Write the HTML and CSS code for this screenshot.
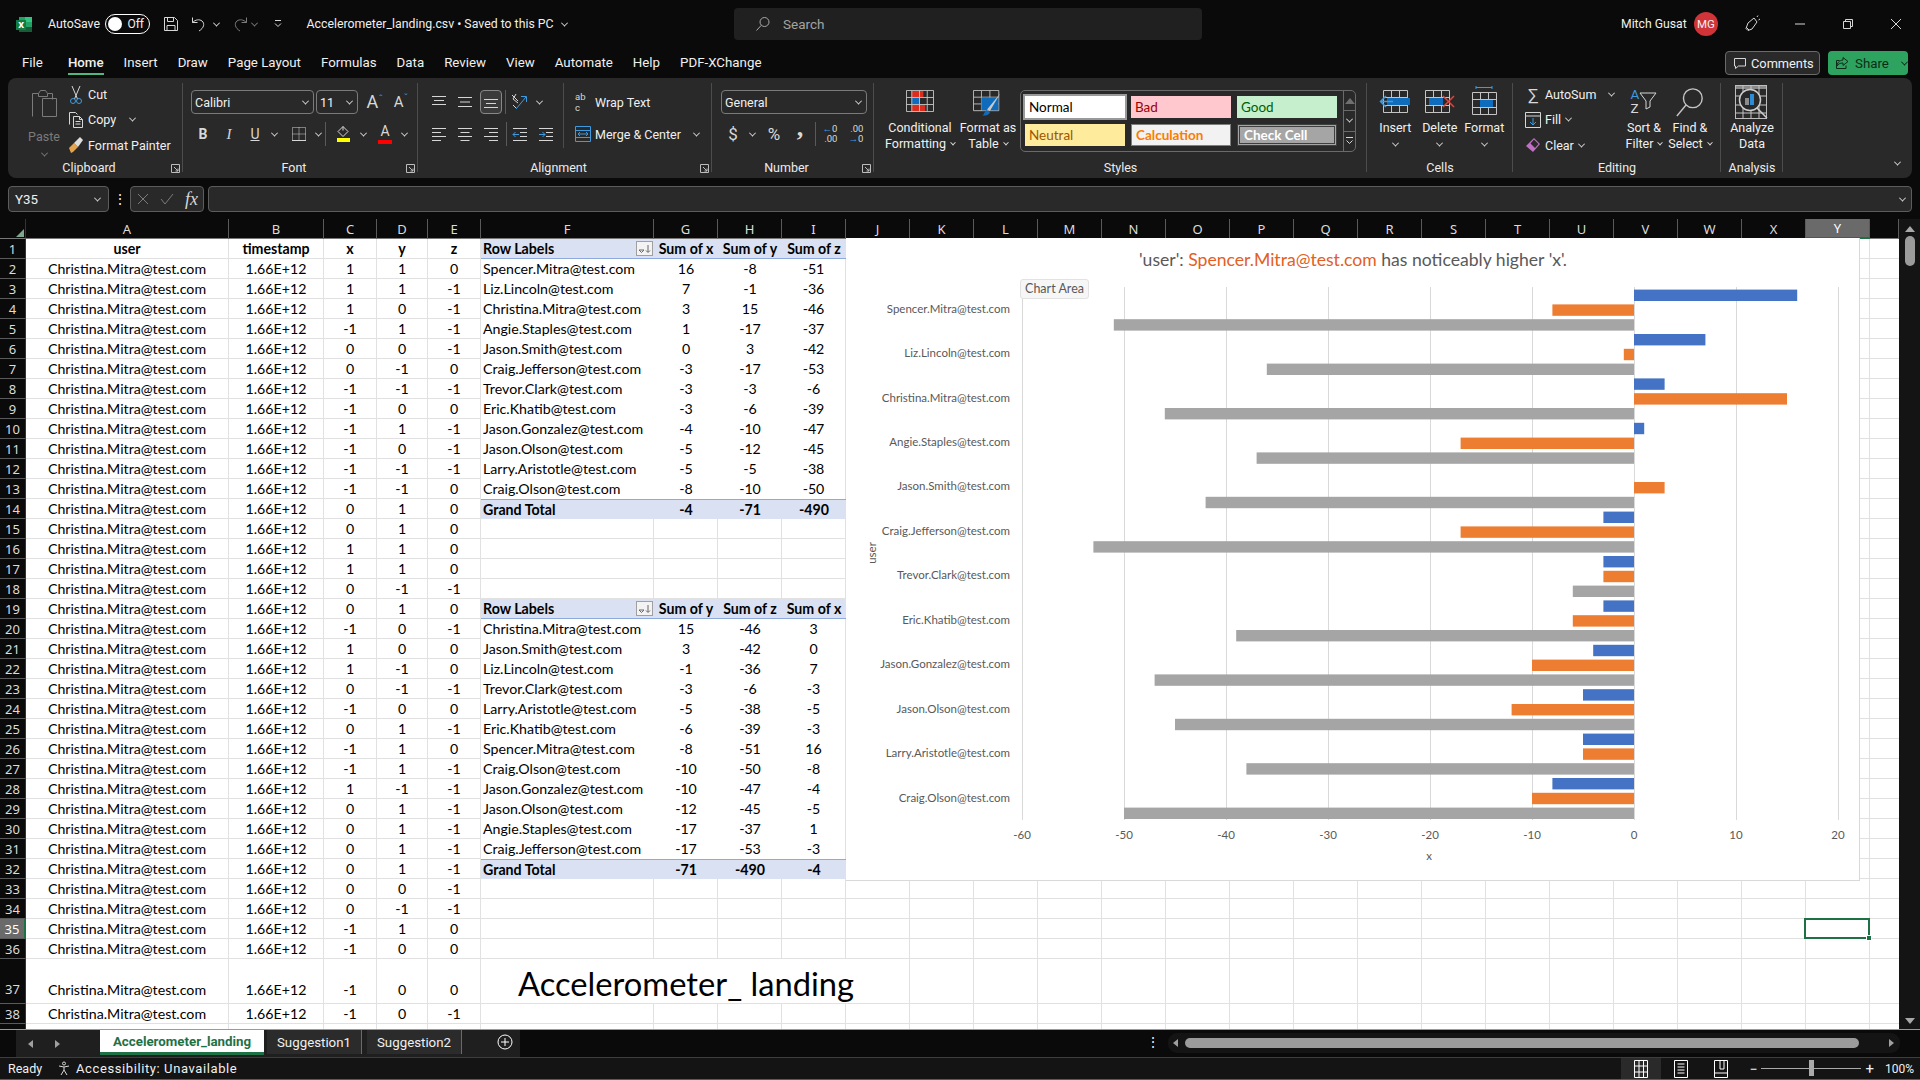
FILE: index.html
```html
<!DOCTYPE html>
<html lang="en">
<head>
    <meta charset="utf-8">
    <title>Accelerometer_landing.csv - Excel</title>
    <link rel="stylesheet" href="styles.css">
</head>
<body>

<!-- title bar -->
<header class="titlebar">
    <div class="tb-left">
        <svg class="xl-logo" width="17" height="17" viewBox="0 0 17 17"><rect x="4" y="1" width="13" height="15" fill="#21a366"/><rect x="10" y="1" width="7" height="5" fill="#33c481"/><rect x="4" y="11" width="13" height="5" fill="#185c37"/><rect x="1" y="4" width="10" height="10" fill="#107c41"/><text x="3.2" y="12" class="xl-x">x</text></svg>
        <span class="autosave">AutoSave</span>
        <span class="toggle"><i></i>Off</span>
        <svg class="ic qat-save" width="16" height="16" viewBox="0 0 16 16"><path d="M1.5 1.5h10l3 3v10h-13zM4.5 1.5v4h6v-4M4 14.5v-5h8v5"/></svg>
        <svg class="ic qat-undo" width="16" height="16" viewBox="0 0 16 16"><path d="M1.5 1.5v5h5M1.5 6.5c3-3 7-3.500 9.500-1.500 3 2.500 2 7-3 10"/></svg>
        <span class="chev qat-c1"></span>
        <svg class="ic dim qat-redo" width="16" height="16" viewBox="0 0 16 16"><path d="M14.500 1.500v5h-5M14.500 6.500c-3-3-7-3.500-9.500-1.500-3 2.500-2 7 3 10"/></svg>
        <span class="chev dimc qat-c2"></span>
        <svg class="ic qat-more" width="10" height="10" viewBox="0 0 10 10"><path d="M2 1.500h6M2 4.500l3 3 3-3"/></svg>
        <span class="doc-title">Accelerometer_landing.csv &bull; Saved to this PC</span>
        <span class="chev doc-c"></span>
    </div>
    <div class="search">
        <svg class="ic dim2" width="16" height="16" viewBox="0 0 16 16"><circle cx="9.500" cy="6" r="4.500"/><path d="M6.300 9.300L1.500 14.500"/></svg>
        <span>Search</span>
    </div>
    <div class="tb-right">
        <span class="user-name">Mitch Gusat</span>
        <span class="avatar">MG</span>
        <svg class="ic pen" width="18" height="18" viewBox="0 0 18 18"><path d="M5 8l6-5 3 4-5 7-4 1.500-2-2zM14 2l1-1.500M15.500 5L17 4M3 12l3 3"/></svg>
        <svg class="ic win-btn" width="12" height="12" viewBox="0 0 12 12"><path d="M1 6h10"/></svg>
        <svg class="ic win-btn" width="12" height="12" viewBox="0 0 12 12"><path d="M1.500 3.500h7v7h-7zM3.500 3.500v-2h7v7h-2"/></svg>
        <svg class="ic win-btn" width="12" height="12" viewBox="0 0 12 12"><path d="M1 1l10 10M11 1L1 11"/></svg>
    </div>
</header>

<!-- menu tabs -->
<nav class="menubar">
    <a class="m-item m-file">File</a>
    <a class="m-item on">Home</a>
    <a class="m-item">Insert</a>
    <a class="m-item">Draw</a>
    <a class="m-item">Page Layout</a>
    <a class="m-item">Formulas</a>
    <a class="m-item">Data</a>
    <a class="m-item">Review</a>
    <a class="m-item">View</a>
    <a class="m-item">Automate</a>
    <a class="m-item">Help</a>
    <a class="m-item">PDF-XChange</a>
    <div class="m-right">
        <button class="btn-comments"><svg class="ic" width="14" height="14" viewBox="0 0 14 14"><path d="M1.500 2.500h11v7.500h-7l-3 2.500v-2.500h-1z"/></svg>Comments</button>
        <button class="btn-share"><svg class="ic darkic" width="14" height="14" viewBox="0 0 14 14"><path d="M8 1.500l5 4-5 4v-2.500c-3 0-5 1-6 3 0-3 2-5.500 6-6zM11 9.500v3h-9.500v-8h3"/></svg>Share<span class="chev darkc"></span></button>
    </div>
</nav>

<!-- ribbon -->
<section class="ribbon">

    <div class="group g-clip">
        <div class="g-body">
            <div class="paste">
                <svg class="ic dim" width="30" height="32" viewBox="0 0 30 32"><path d="M3.500 28.500V5.500h6l2-3h5l2 3h5v6M9.500 5.500v3h9v-3"/><path d="M13.500 13.500h14v18h-14z" transform="translate(0 -3)"/></svg>
                <span class="paste-txt">Paste</span>
                <span class="chev dimc"></span>
            </div>
            <div class="stack">
                <div class="s-row"><svg class="ic ic-s" width="16" height="20" viewBox="0 0 16 20"><path d="M4 1l5.500 13M12 1L6.500 14"/><circle class="blue" cx="5" cy="16" r="2.500"/><circle class="blue" cx="11" cy="16" r="2.500"/></svg>Cut</div>
                <div class="s-row"><svg class="ic ic-s" width="16" height="18" viewBox="0 0 16 18"><path d="M1.500 13.500v-12h6l2 2M5.500 16.500v-11h6l3 3v8zM11.500 5.500v3h3M7.500 10.500h5M7.500 13h5"/></svg>Copy<span class="chev copy-c"></span></div>
                <div class="s-row"><svg class="ic-s" width="16" height="18" viewBox="0 0 16 18"><path d="M1 12l5-5 4 4-5 5-2 1z" fill="#e3a44d"/><path d="M6 7l6-6 3 3-5 7z" fill="#ddd"/></svg>Format Painter</div>
            </div>
        </div>
        <div class="g-label">Clipboard<svg class="launch" width="9" height="9" viewBox="0 0 9 9"><path d="M.5 8.500v-8h8v8zM3 3l4 4M7 4.500V7H4.500"/></svg></div>
    </div>

    <div class="group g-font">
        <div class="g-body col">
            <div class="r-row">
                <div class="combo c-font">Calibri<span class="chev"></span></div>
                <div class="combo c-size">11<span class="chev"></span></div>
                <span class="glyph-a">A<sup>&#710;</sup></span>
                <span class="glyph-a small">A<sup>&#711;</sup></span>
            </div>
            <div class="r-row">
                <span class="ib"><b>B</b></span>
                <span class="ib"><i class="it">I</i></span>
                <span class="ib"><u>U</u></span>
                <span class="chev cw"></span>
                <span class="ib bd"><svg class="ic" width="16" height="16" viewBox="0 0 16 16"><path stroke-dasharray="1 1" d="M1.500 1.500h13v13h-13zM8 1.500v13M1.500 8h13"/><path d="M1 14.500h14"/></svg></span>
                <span class="chev cw"></span>
                <span class="sep s1"></span>
                <span class="ib"><svg class="ic" width="16" height="18" viewBox="0 0 16 18"><path d="M7 1.500l5 5-5 5-5-5zM7 1.500v4"/><rect x="1" y="13" width="13" height="4" fill="#ffff00" stroke="none"/></svg></span>
                <span class="chev cw"></span>
                <span class="ib fc"><span class="fc-a">A</span></span>
                <span class="chev cw"></span>
            </div>
        </div>
        <div class="g-label">Font<svg class="launch" width="9" height="9" viewBox="0 0 9 9"><path d="M.5 8.500v-8h8v8zM3 3l4 4M7 4.500V7H4.500"/></svg></div>
    </div>

    <div class="group g-align">
        <div class="g-body">
            <div class="al-left col">
                <div class="r-row">
                    <span class="ia"><svg class="ic" width="16" height="14" viewBox="0 0 16 14"><path d="M1 1.500h14M3 5.500h10M1 9.500h14"/></svg></span>
                    <span class="ia"><svg class="ic" width="16" height="14" viewBox="0 0 16 14"><path d="M1 2.500h14M3 7h10M1 11.500h14"/></svg></span>
                    <span class="ia sel"><svg class="ic" width="16" height="14" viewBox="0 0 16 14"><path d="M1 4.500h14M3 8.500h10M1 12.500h14"/></svg></span>
                    <span class="sep s2"></span>
                    <span class="ia orient"><svg class="ic" width="18" height="18" viewBox="0 0 18 18"><path d="M2 2l6 6M6 1l-3 5 5 4M3 12l3 3"/><path class="blue" d="M6 16L16 4M11 3.500h5.500V9"/></svg></span>
                    <span class="chev cw"></span>
                </div>
                <div class="r-row">
                    <span class="ia"><svg class="ic" width="16" height="14" viewBox="0 0 16 14"><path d="M1 1.500h14M1 5.500h9M1 9.500h14M1 13.500h9"/></svg></span>
                    <span class="ia"><svg class="ic" width="16" height="14" viewBox="0 0 16 14"><path d="M1 1.500h14M3.500 5.500h9M1 9.500h14M3.500 13.500h9"/></svg></span>
                    <span class="ia"><svg class="ic" width="16" height="14" viewBox="0 0 16 14"><path d="M1 1.500h14M6 5.500h9M1 9.500h14M6 13.500h9"/></svg></span>
                    <span class="sep s2"></span>
                    <span class="ia ind1"><svg class="ic" width="16" height="14" viewBox="0 0 16 14"><path d="M1 1.500h14M8 5.500h7M8 9.500h7M1 13.500h14"/><path class="blue" d="M7 7.500H1M3.500 5L1 7.500 3.500 10"/></svg></span>
                    <span class="ia ind2"><svg class="ic" width="16" height="14" viewBox="0 0 16 14"><path d="M1 1.500h14M8 5.500h7M8 9.500h7M1 13.500h14"/><path class="blue" d="M1 7.500h6M4.500 5L7 7.500 4.500 10"/></svg></span>
                </div>
            </div>
            <div class="al-right col">
                <div class="a-row"><span class="abc-ic"><span>ab</span><span class="abc-c">c</span></span>Wrap Text</div>
                <div class="a-row"><svg class="ic ic-s" width="16" height="16" viewBox="0 0 16 16"><path class="blue" d="M.5.500h15v15H.5zM.5 4.500h15M.5 11.500h15M3 8h10M5 6L3 8l2 2M11 6l2 2-2 2"/></svg>Merge &amp; Center<span class="chev merge-c"></span></div>
            </div>
        </div>
        <div class="g-label">Alignment<svg class="launch" width="9" height="9" viewBox="0 0 9 9"><path d="M.5 8.500v-8h8v8zM3 3l4 4M7 4.500V7H4.500"/></svg></div>
    </div>

    <div class="group g-num">
        <div class="g-body col">
            <div class="r-row"><div class="combo c-general">General<span class="chev"></span></div></div>
            <div class="r-row">
                <span class="ib big-g">$</span>
                <span class="chev cw"></span>
                <span class="ib big-g pct">%</span>
                <span class="ib comma">,</span>
                <span class="sep s3"></span>
                <span class="ib dec"><span class="dec-a"><em>&larr;</em>0<br>.00</span></span>
                <span class="ib dec"><span class="dec-a">.00<br><em>&rarr;</em>0</span></span>
            </div>
        </div>
        <div class="g-label">Number<svg class="launch" width="9" height="9" viewBox="0 0 9 9"><path d="M.5 8.500v-8h8v8zM3 3l4 4M7 4.500V7H4.500"/></svg></div>
    </div>

    <div class="group g-styles">
        <div class="g-body">
            <div class="bigbtn w72">
                <svg class="bicon" width="28" height="22" viewBox="0 0 29 25" preserveAspectRatio="none"><rect x="6" y="1" width="12" height="7" fill="#dc2c1e"/><rect x="6" y="9" width="8" height="7" fill="#0f6cbd"/><rect x="6" y="17" width="14" height="8" fill="#dc2c1e"/><path class="grid-l" d="M.5.500h28v24H.5zM.5 8.500h28M.5 16.500h28M6 .5v24M14 .5v24M22 .5v24"/></svg>
                <span>Conditional</span><span>Formatting<i class="chev mini"></i></span>
            </div>
            <div class="bigbtn w64">
                <svg class="bicon" width="30" height="27" viewBox="0 0 32 32" preserveAspectRatio="none"><path class="grid-l" d="M.5.500h27v24H.5zM.5 8.500h27M.5 16.500h27M9 .5v24M18 .5v24"/><rect x="9" y="9" width="18" height="15" fill="#0f6cbd"/><path d="M29 4L15 23l3 2z" fill="#c9c9c9"/><path d="M14 24l4 2c0 3-4 5-8 4 2-1 2-4 4-6z" fill="#0f6cbd"/></svg>
                <span>Format as</span><span>Table<i class="chev mini"></i></span>
            </div>
            <div class="gallery">
                <div class="st-grid">
                    <span class="st st-normal">Normal</span>
                    <span class="st st-bad">Bad</span>
                    <span class="st st-good">Good</span>
                    <span class="st st-neutral">Neutral</span>
                    <span class="st st-calc">Calculation</span>
                    <span class="st st-check">Check Cell</span>
                </div>
                <div class="st-scroll">
                    <span><i class="tri-up"></i></span>
                    <span><i class="chev"></i></span>
                    <span><svg class="ic" width="9" height="10" viewBox="0 0 9 10"><path d="M1 1.500h7M1.500 4.500l3 3 3-3"/></svg></span>
                </div>
            </div>
        </div>
        <div class="g-label">Styles</div>
    </div>

    <div class="group g-cells">
        <div class="g-body">
            <div class="bigbtn w44">
                <svg class="bicon m5" width="32" height="26" viewBox="0 0 32 26"><path class="grid-l" d="M4.500 2.500h24v22h-24zM4.500 9.500h24M4.500 17.500h24M12.500 2.500v22M20.500 2.500v22"/><rect x="8" y="10" width="23" height="7" fill="#0f6cbd"/><path class="blue2" d="M14 13.500H2M7 8l-5.500 5.500L7 19"/></svg>
                <span>Insert</span><i class="chev"></i>
            </div>
            <div class="bigbtn w44">
                <svg class="bicon m5" width="32" height="26" viewBox="0 0 32 26"><path class="grid-l" d="M1.500 2.500h24v22h-24zM1.500 9.500h24M1.500 17.500h24M9.500 2.500v7M17.500 2.500v7M9.500 17.500v7M17.500 17.500v7"/><rect x="5" y="10" width="14" height="7" fill="#0f6cbd"/><path class="red" d="M19 8l11 11M30 8L19 19"/></svg>
                <span>Delete</span><i class="chev"></i>
            </div>
            <div class="bigbtn w44">
                <svg class="bicon m3" width="28" height="30" viewBox="0 0 28 30"><path class="blue" d="M6 1.500h16M6 0v3M22 0v3"/><path class="grid-l" d="M2.500 6.500h24v22h-24zM2.500 13.500h24M2.500 21.500h24M10.500 6.500v22M18.500 6.500v22"/><rect x="10" y="14" width="13" height="7" fill="#0f6cbd"/></svg>
                <span>Format</span><i class="chev"></i>
            </div>
        </div>
        <div class="g-label">Cells</div>
    </div>

    <div class="group g-edit">
        <div class="g-body">
            <div class="stack">
                <div class="s-row"><span class="sigma">&sum;</span>AutoSum<span class="chev auto-c"></span></div>
                <div class="s-row"><svg class="ic ic-s" width="16" height="16" viewBox="0 0 16 16"><path d="M.5.500h15v15H.5zM.5 4h15"/><path class="blue" d="M8 6v7M5 10l3 3 3-3"/></svg>Fill<span class="chev"></span></div>
                <div class="s-row"><svg class="ic-s" width="16" height="16" viewBox="0 0 16 16"><path d="M9 1l6 6-7 8-7-6z" fill="#c16fc4"/><path d="M9 2.500l4.500 4.500-3.500 4-4.500-4.500z" fill="#292929"/></svg>Clear<span class="chev"></span></div>
            </div>
            <div class="bigbtn w46">
                <div class="sort-ic"><span class="az"><span>A</span><em>Z</em></span><svg class="ic" width="18" height="18" viewBox="0 0 18 18"><path d="M1 1h16l-6 8v6l-4 2V9z"/></svg></div>
                <span>Sort &amp;</span><span>Filter<i class="chev mini"></i></span>
            </div>
            <div class="bigbtn w46">
                <svg class="bicon m4" width="30" height="30" viewBox="0 0 30 32"><circle class="grey-l" cx="18" cy="12" r="10"/><path class="grey-l" d="M11 19L1 31"/></svg>
                <span>Find &amp;</span><span>Select<i class="chev mini"></i></span>
            </div>
        </div>
        <div class="g-label">Editing</div>
    </div>

    <div class="group g-ana">
        <div class="g-body">
            <div class="bigbtn w62">
                <svg class="bicon m2" width="34" height="34" viewBox="0 0 34 34"><rect x=".5" y=".5" width="31" height="33" fill="none" stroke="#bdbdbd"/><rect x="1" y="1" width="30" height="3" fill="#8a8a8a"/><path class="grid-l" d="M.5 11h31M.5 20h31M.5 28h31M8 0v34M16 0v34M24 0v34"/><circle cx="15" cy="15" r="10.500" fill="#292929" stroke="#cfcfcf" stroke-width="1.500"/><rect x="10" y="13" width="4" height="7" fill="#8c8c8c"/><rect x="15" y="9" width="4" height="11" fill="#2e8bd6"/><path d="M22 23l10 10" stroke="#cfcfcf" stroke-width="1.500"/></svg>
                <span>Analyze</span><span>Data</span>
            </div>
        </div>
        <div class="g-label">Analysis</div>
    </div>

    <span class="chev collapse"></span>
</section>

<!-- formula bar -->
<div class="formula">
    <div class="namebox">Y35<span class="chev"></span></div>
    <span class="f-dots">&#8942;</span>
    <div class="fxbox">
        <svg class="ic dim" width="12" height="12" viewBox="0 0 12 12"><path d="M1 1l10 10M11 1L1 11"/></svg>
        <svg class="ic dim" width="14" height="12" viewBox="0 0 14 12"><path d="M1 6l4 5 8-10"/></svg>
        <i class="fx">fx</i>
    </div>
    <div class="f-input"><span class="chev"></span></div>
</div>

<!-- sheet -->
<div class="sheet">
    <div class="grid-wrap">
        <table class="cells">
            <colgroup>
                <col class="w-row"><col class="w-a"><col class="w-b"><col class="w-c"><col class="w-d"><col class="w-e"><col class="w-f">
                <col class="w-n" span="3"><col class="w-n" span="16"><col class="w-z">
            </colgroup>
            <thead>
                <tr>
                    <th class="corner"><i></i></th>
                    <th>A</th><th>B</th><th>C</th><th>D</th><th>E</th><th>F</th><th>G</th><th>H</th><th>I</th><th>J</th><th>K</th><th>L</th><th>M</th><th>N</th><th>O</th><th>P</th><th>Q</th><th>R</th><th>S</th><th>T</th><th>U</th><th>V</th><th>W</th><th>X</th><th class="sel-col">Y</th><th></th>
                </tr>
            </thead>
            <tbody>
                <tr class="pv head first"><th>1</th><td>user</td><td>timestamp</td><td>x</td><td>y</td><td>z</td><td><div class="rowlab">Row Labels<span class="filt"><svg width="13" height="10" viewBox="0 0 13 10"><path d="M1 6h5l-2.500 2.500zM10 1v7M8 6.500l2 2 2-2" fill="none" stroke="#666"/></svg></span></div></td><td>Sum of x</td><td>Sum of y</td><td>Sum of z</td><td class="rest" colspan="17"></td></tr>
                <tr class="pv"><th>2</th><td>Christina.Mitra@test.com</td><td>1.66E+12</td><td>1</td><td>1</td><td>0</td><td>Spencer.Mitra@test.com</td><td>16</td><td>-8</td><td>-51</td><td class="rest" colspan="17"></td></tr>
                <tr class="pv"><th>3</th><td>Christina.Mitra@test.com</td><td>1.66E+12</td><td>1</td><td>1</td><td>-1</td><td>Liz.Lincoln@test.com</td><td>7</td><td>-1</td><td>-36</td><td class="rest" colspan="17"></td></tr>
                <tr class="pv"><th>4</th><td>Christina.Mitra@test.com</td><td>1.66E+12</td><td>1</td><td>0</td><td>-1</td><td>Christina.Mitra@test.com</td><td>3</td><td>15</td><td>-46</td><td class="rest" colspan="17"></td></tr>
                <tr class="pv"><th>5</th><td>Christina.Mitra@test.com</td><td>1.66E+12</td><td>-1</td><td>1</td><td>-1</td><td>Angie.Staples@test.com</td><td>1</td><td>-17</td><td>-37</td><td class="rest" colspan="17"></td></tr>
                <tr class="pv"><th>6</th><td>Christina.Mitra@test.com</td><td>1.66E+12</td><td>0</td><td>0</td><td>-1</td><td>Jason.Smith@test.com</td><td>0</td><td>3</td><td>-42</td><td class="rest" colspan="17"></td></tr>
                <tr class="pv"><th>7</th><td>Christina.Mitra@test.com</td><td>1.66E+12</td><td>0</td><td>-1</td><td>0</td><td>Craig.Jefferson@test.com</td><td>-3</td><td>-17</td><td>-53</td><td class="rest" colspan="17"></td></tr>
                <tr class="pv"><th>8</th><td>Christina.Mitra@test.com</td><td>1.66E+12</td><td>-1</td><td>-1</td><td>-1</td><td>Trevor.Clark@test.com</td><td>-3</td><td>-3</td><td>-6</td><td class="rest" colspan="17"></td></tr>
                <tr class="pv"><th>9</th><td>Christina.Mitra@test.com</td><td>1.66E+12</td><td>-1</td><td>0</td><td>0</td><td>Eric.Khatib@test.com</td><td>-3</td><td>-6</td><td>-39</td><td class="rest" colspan="17"></td></tr>
                <tr class="pv"><th>10</th><td>Christina.Mitra@test.com</td><td>1.66E+12</td><td>-1</td><td>1</td><td>-1</td><td>Jason.Gonzalez@test.com</td><td>-4</td><td>-10</td><td>-47</td><td class="rest" colspan="17"></td></tr>
                <tr class="pv"><th>11</th><td>Christina.Mitra@test.com</td><td>1.66E+12</td><td>-1</td><td>0</td><td>-1</td><td>Jason.Olson@test.com</td><td>-5</td><td>-12</td><td>-45</td><td class="rest" colspan="17"></td></tr>
                <tr class="pv"><th>12</th><td>Christina.Mitra@test.com</td><td>1.66E+12</td><td>-1</td><td>-1</td><td>-1</td><td>Larry.Aristotle@test.com</td><td>-5</td><td>-5</td><td>-38</td><td class="rest" colspan="17"></td></tr>
                <tr class="pv"><th>13</th><td>Christina.Mitra@test.com</td><td>1.66E+12</td><td>-1</td><td>-1</td><td>0</td><td>Craig.Olson@test.com</td><td>-8</td><td>-10</td><td>-50</td><td class="rest" colspan="17"></td></tr>
                <tr class="pv total"><th>14</th><td>Christina.Mitra@test.com</td><td>1.66E+12</td><td>0</td><td>1</td><td>0</td><td>Grand Total</td><td>-4</td><td>-71</td><td>-490</td><td class="rest" colspan="17"></td></tr>
                <tr><th>15</th><td>Christina.Mitra@test.com</td><td>1.66E+12</td><td>0</td><td>1</td><td>0</td><td></td><td></td><td></td><td></td><td class="rest" colspan="17"></td></tr>
                <tr><th>16</th><td>Christina.Mitra@test.com</td><td>1.66E+12</td><td>1</td><td>1</td><td>0</td><td></td><td></td><td></td><td></td><td class="rest" colspan="17"></td></tr>
                <tr><th>17</th><td>Christina.Mitra@test.com</td><td>1.66E+12</td><td>1</td><td>1</td><td>0</td><td></td><td></td><td></td><td></td><td class="rest" colspan="17"></td></tr>
                <tr><th>18</th><td>Christina.Mitra@test.com</td><td>1.66E+12</td><td>0</td><td>-1</td><td>-1</td><td></td><td></td><td></td><td></td><td class="rest" colspan="17"></td></tr>
                <tr class="pv head"><th>19</th><td>Christina.Mitra@test.com</td><td>1.66E+12</td><td>0</td><td>1</td><td>0</td><td><div class="rowlab">Row Labels<span class="filt"><svg width="13" height="10" viewBox="0 0 13 10"><path d="M1 6h5l-2.500 2.500zM10 1v7M8 6.500l2 2 2-2" fill="none" stroke="#666"/></svg></span></div></td><td>Sum of y</td><td>Sum of z</td><td>Sum of x</td><td class="rest" colspan="17"></td></tr>
                <tr class="pv"><th>20</th><td>Christina.Mitra@test.com</td><td>1.66E+12</td><td>-1</td><td>0</td><td>-1</td><td>Christina.Mitra@test.com</td><td>15</td><td>-46</td><td>3</td><td class="rest" colspan="17"></td></tr>
                <tr class="pv"><th>21</th><td>Christina.Mitra@test.com</td><td>1.66E+12</td><td>1</td><td>0</td><td>0</td><td>Jason.Smith@test.com</td><td>3</td><td>-42</td><td>0</td><td class="rest" colspan="17"></td></tr>
                <tr class="pv"><th>22</th><td>Christina.Mitra@test.com</td><td>1.66E+12</td><td>1</td><td>-1</td><td>0</td><td>Liz.Lincoln@test.com</td><td>-1</td><td>-36</td><td>7</td><td class="rest" colspan="17"></td></tr>
                <tr class="pv"><th>23</th><td>Christina.Mitra@test.com</td><td>1.66E+12</td><td>0</td><td>-1</td><td>-1</td><td>Trevor.Clark@test.com</td><td>-3</td><td>-6</td><td>-3</td><td class="rest" colspan="17"></td></tr>
                <tr class="pv"><th>24</th><td>Christina.Mitra@test.com</td><td>1.66E+12</td><td>-1</td><td>0</td><td>0</td><td>Larry.Aristotle@test.com</td><td>-5</td><td>-38</td><td>-5</td><td class="rest" colspan="17"></td></tr>
                <tr class="pv"><th>25</th><td>Christina.Mitra@test.com</td><td>1.66E+12</td><td>0</td><td>1</td><td>-1</td><td>Eric.Khatib@test.com</td><td>-6</td><td>-39</td><td>-3</td><td class="rest" colspan="17"></td></tr>
                <tr class="pv"><th>26</th><td>Christina.Mitra@test.com</td><td>1.66E+12</td><td>-1</td><td>1</td><td>0</td><td>Spencer.Mitra@test.com</td><td>-8</td><td>-51</td><td>16</td><td class="rest" colspan="17"></td></tr>
                <tr class="pv"><th>27</th><td>Christina.Mitra@test.com</td><td>1.66E+12</td><td>-1</td><td>1</td><td>-1</td><td>Craig.Olson@test.com</td><td>-10</td><td>-50</td><td>-8</td><td class="rest" colspan="17"></td></tr>
                <tr class="pv"><th>28</th><td>Christina.Mitra@test.com</td><td>1.66E+12</td><td>1</td><td>-1</td><td>-1</td><td>Jason.Gonzalez@test.com</td><td>-10</td><td>-47</td><td>-4</td><td class="rest" colspan="17"></td></tr>
                <tr class="pv"><th>29</th><td>Christina.Mitra@test.com</td><td>1.66E+12</td><td>0</td><td>1</td><td>-1</td><td>Jason.Olson@test.com</td><td>-12</td><td>-45</td><td>-5</td><td class="rest" colspan="17"></td></tr>
                <tr class="pv"><th>30</th><td>Christina.Mitra@test.com</td><td>1.66E+12</td><td>0</td><td>1</td><td>-1</td><td>Angie.Staples@test.com</td><td>-17</td><td>-37</td><td>1</td><td class="rest" colspan="17"></td></tr>
                <tr class="pv"><th>31</th><td>Christina.Mitra@test.com</td><td>1.66E+12</td><td>0</td><td>1</td><td>-1</td><td>Craig.Jefferson@test.com</td><td>-17</td><td>-53</td><td>-3</td><td class="rest" colspan="17"></td></tr>
                <tr class="pv total"><th>32</th><td>Christina.Mitra@test.com</td><td>1.66E+12</td><td>0</td><td>1</td><td>-1</td><td>Grand Total</td><td>-71</td><td>-490</td><td>-4</td><td class="rest" colspan="17"></td></tr>
                <tr><th>33</th><td>Christina.Mitra@test.com</td><td>1.66E+12</td><td>0</td><td>0</td><td>-1</td><td></td><td></td><td></td><td></td><td class="rest" colspan="17"></td></tr>
                <tr><th>34</th><td>Christina.Mitra@test.com</td><td>1.66E+12</td><td>0</td><td>-1</td><td>-1</td><td></td><td></td><td></td><td></td><td class="rest" colspan="17"></td></tr>
                <tr><th class="sel-row">35</th><td>Christina.Mitra@test.com</td><td>1.66E+12</td><td>-1</td><td>1</td><td>0</td><td></td><td></td><td></td><td></td><td class="rest" colspan="17"></td></tr>
                <tr><th>36</th><td>Christina.Mitra@test.com</td><td>1.66E+12</td><td>-1</td><td>0</td><td>0</td><td></td><td></td><td></td><td></td><td class="rest" colspan="17"></td></tr>
                <tr class="tall"><th>37</th><td>Christina.Mitra@test.com</td><td>1.66E+12</td><td>-1</td><td>0</td><td>0</td><td class="big" colspan="5">Accelerometer_ landing</td><td class="rest" colspan="16"></td></tr>
                <tr><th>38</th><td>Christina.Mitra@test.com</td><td>1.66E+12</td><td>-1</td><td>0</td><td>-1</td><td></td><td></td><td></td><td></td><td class="rest" colspan="17"></td></tr>
                <tr><th></th><td></td><td></td><td></td><td></td><td></td><td></td><td></td><td></td><td></td><td class="rest" colspan="17"></td></tr>
            </tbody>
        </table>

        <div class="active-cell"><i></i></div>

        <div class="chart">
            <svg class="chart-svg" width="1013" height="642" viewBox="0 0 1013 642">
                <text class="c-title" x="507" y="28" text-anchor="middle">'user': <tspan class="c-hi">Spencer.Mitra@test.com</tspan> has noticeably higher 'x'.</text>
                <path class="c-gridlines" d="M176.500 49v533M278.500 49v533M380.500 49v533M482.500 49v533M584.500 49v533M686.500 49v533M788.500 49v533M890.500 49v533M992.500 49v533"/>

                <g transform="translate(0 49)"><rect class="b-x" x="788" width="163.200"/><rect class="b-y" x="706.400" width="81.600"/><rect class="b-z" x="267.800" width="520.200"/></g>
                <g transform="translate(0 93.400)"><rect class="b-x" x="788" width="71.400"/><rect class="b-y" x="777.800" width="10.200"/><rect class="b-z" x="420.800" width="367.200"/></g>
                <g transform="translate(0 137.800)"><rect class="b-x" x="788" width="30.600"/><rect class="b-y" x="788" width="153"/><rect class="b-z" x="318.800" width="469.200"/></g>
                <g transform="translate(0 182.200)"><rect class="b-x" x="788" width="10.200"/><rect class="b-y" x="614.600" width="173.400"/><rect class="b-z" x="410.600" width="377.400"/></g>
                <g transform="translate(0 226.600)"><rect class="b-y" x="788" width="30.600"/><rect class="b-z" x="359.600" width="428.400"/></g>
                <g transform="translate(0 271)"><rect class="b-x" x="757.400" width="30.600"/><rect class="b-y" x="614.600" width="173.400"/><rect class="b-z" x="247.400" width="540.600"/></g>
                <g transform="translate(0 315.400)"><rect class="b-x" x="757.400" width="30.600"/><rect class="b-y" x="757.400" width="30.600"/><rect class="b-z" x="726.800" width="61.200"/></g>
                <g transform="translate(0 359.800)"><rect class="b-x" x="757.400" width="30.600"/><rect class="b-y" x="726.800" width="61.200"/><rect class="b-z" x="390.200" width="397.800"/></g>
                <g transform="translate(0 404.200)"><rect class="b-x" x="747.200" width="40.800"/><rect class="b-y" x="686" width="102"/><rect class="b-z" x="308.600" width="479.400"/></g>
                <g transform="translate(0 448.600)"><rect class="b-x" x="737" width="51"/><rect class="b-y" x="665.600" width="122.400"/><rect class="b-z" x="329" width="459"/></g>
                <g transform="translate(0 493)"><rect class="b-x" x="737" width="51"/><rect class="b-y" x="737" width="51"/><rect class="b-z" x="400.400" width="387.600"/></g>
                <g transform="translate(0 537.400)"><rect class="b-x" x="706.400" width="81.600"/><rect class="b-y" x="686" width="102"/><rect class="b-z" x="278" width="510"/></g>

                <g class="c-cats" text-anchor="end">
                    <text x="164" y="75">Spencer.Mitra@test.com</text>
                    <text x="164" y="119">Liz.Lincoln@test.com</text>
                    <text x="164" y="164">Christina.Mitra@test.com</text>
                    <text x="164" y="208">Angie.Staples@test.com</text>
                    <text x="164" y="252">Jason.Smith@test.com</text>
                    <text x="164" y="297">Craig.Jefferson@test.com</text>
                    <text x="164" y="341">Trevor.Clark@test.com</text>
                    <text x="164" y="386">Eric.Khatib@test.com</text>
                    <text x="164" y="430">Jason.Gonzalez@test.com</text>
                    <text x="164" y="475">Jason.Olson@test.com</text>
                    <text x="164" y="519">Larry.Aristotle@test.com</text>
                    <text x="164" y="564">Craig.Olson@test.com</text>
                </g>
                <g class="c-vals" text-anchor="middle">
                    <text x="176" y="601">-60</text>
                    <text x="278" y="601">-50</text>
                    <text x="380" y="601">-40</text>
                    <text x="482" y="601">-30</text>
                    <text x="584" y="601">-20</text>
                    <text x="686" y="601">-10</text>
                    <text x="788" y="601">0</text>
                    <text x="890" y="601">10</text>
                    <text x="992" y="601">20</text>
                </g>
                <text class="c-axis" x="583" y="622" text-anchor="middle">x</text>
                <text class="c-axis" text-anchor="middle" transform="translate(30 315) rotate(-90)">user</text>
            </svg>
            <div class="chart-tip">Chart Area</div>
        </div>
    </div>

    <aside class="vscroll">
        <i class="tri-up"></i>
        <span class="v-thumb"></span>
        <i class="tri-down"></i>
    </aside>
</div>

<!-- sheet tabs -->
<footer class="tabbar">
    <div class="tab-strip">
        <div class="tab-nav"><i class="tri-left"></i><i class="tri-right"></i></div>
        <div class="tab on">Accelerometer_landing</div>
        <div class="tab">Suggestion1</div>
        <div class="tab">Suggestion2</div>
        <div class="tab-add"><svg class="ic white" width="16" height="16" viewBox="0 0 16 16"><circle cx="8" cy="8" r="7"/><path d="M8 4v8M4 8h8"/></svg></div>
    </div>
    <span class="h-dots">&#8942;</span>
    <div class="hscroll"><i class="tri-left"></i><span class="h-thumb"></span><i class="tri-right"></i></div>
</footer>

<!-- status bar -->
<div class="statusbar">
    <span class="st-ready">Ready</span>
    <svg class="ic access" width="15" height="15" viewBox="0 0 15 15"><circle cx="6" cy="2.500" r="1.500"/><path d="M1 5l5 1 5-1M6 6v3M6 9l-3 5M6 9l3 5"/></svg>
    <span class="st-acc">Accessibility: Unavailable</span>
    <div class="st-right">
        <span class="view on"><svg class="ic white" width="14" height="18" viewBox="0 0 14 18"><path d="M.5.500h13v17H.5zM.5 6h13M.5 12h13M5 .5v17M9.500 .5v17"/></svg></span>
        <span class="view"><svg class="ic white" width="14" height="18" viewBox="0 0 14 18"><path d="M.5.500h13v17H.5zM3.500 4h7M3.500 7h7M3.500 10h7M3.500 13h7"/></svg></span>
        <span class="view"><svg class="ic white" width="14" height="18" viewBox="0 0 14 18"><path d="M.5.500h13v17H.5zM.5 13h13M6 .5V9h4V.5"/></svg></span>
        <span class="zoom-minus">&minus;</span>
        <span class="zoom-track"><i></i></span>
        <span class="zoom-plus">+</span>
        <span class="zoom-pct">100%</span>
    </div>
</div>

</body>
</html>
```

FILE: styles.css
```css
* {
    box-sizing: border-box;
}

body {
    margin: 0;
    width: 1920px;
    height: 1080px;
    overflow: hidden;
    display: flex;
    flex-direction: column;
    background-color: #0a0a0a;
    color: #f0f0f0;
    font-family: Roboto, "Liberation Sans", sans-serif;
    font-size: 12.5px;
}

.ic {
    display: block;
    flex: none;
    fill: none;
    stroke: #d6d6d6;
}

.ic.dim { stroke: #7b7b7b; }
.ic.dim2 { stroke: #a8a8a8; }
.ic.white { stroke: #fff; }
.ic.darkic { stroke: #0c2c18; }
.blue { stroke: #3f9ae0; fill: none; }
.blue2 { stroke: #3f9ae0; fill: none; stroke-width: 1.500; }
.red { stroke: #e0443a; fill: none; stroke-width: 1.500; }
.grid-l { stroke: #c4c4c4; fill: none; }
.grey-l { stroke: #c4c4c4; fill: none; stroke-width: 1.500; }

/* little dropdown arrow, used everywhere */
.chev {
    display: inline-block;
    flex: none;
    width: 5px;
    height: 5px;
    border-right: 1.500px solid #d8d8d8;
    border-bottom: 1.500px solid #d8d8d8;
    transform: rotate(45deg) translate(-1px, -1px);
}

.chev.dimc { border-color: #7b7b7b; }
.chev.darkc { border-color: #0c2c18; }
.chev.mini { width: 4px; height: 4px; margin-left: 5px; vertical-align: 2px; border-width: 0 1px 1px 0; }

/* title bar */
.titlebar {
    height: 48px;
    flex: none;
    display: flex;
    align-items: center;
}

.tb-left {
    width: 734px;
    flex: none;
    display: flex;
    align-items: center;
    padding-left: 15px;
}

.xl-x { font-size: 10px; font-weight: 700; fill: #fff; font-family: "Noto Sans", sans-serif; }
.autosave { margin-left: 16px; width: 50px; flex: none; font-size: 12.300px; }

.toggle {
    margin-left: 7px;
    width: 45px;
    height: 20px;
    border: 1.500px solid #fff;
    border-radius: 10px;
    display: flex;
    align-items: center;
    justify-content: flex-end;
    padding-right: 5px;
    font-size: 12px;
}

.toggle i {
    width: 14px;
    height: 14px;
    background: #fff;
    border-radius: 50%;
    margin-right: auto;
    margin-left: 2px;
}

.qat-save { margin-left: 13px; }
.qat-undo { margin-left: 12px; }
.qat-c1 { margin-left: 6.500px; }
.qat-redo { margin-left: 13px; }
.qat-c2 { margin-left: 4.500px; }
.qat-more { margin-left: 15.500px; }
.doc-title { margin-left: 24px; font-size: 12.300px; }
.doc-c { margin-left: 8px; }

.search {
    width: 468px;
    height: 32px;
    flex: none;
    display: flex;
    align-items: center;
    gap: 12px;
    padding-left: 21px;
    background-color: #202020;
    border-radius: 4px;
    color: #a3a3a3;
    font-size: 13.500px;
}

.tb-right {
    flex: 1;
    display: flex;
    align-items: center;
    padding-left: 419px;
}

.user-name { width: 64px; flex: none; font-size: 12.200px; white-space: nowrap; }

.avatar {
    margin-left: 9px;
    width: 24px;
    height: 24px;
    flex: none;
    border-radius: 50%;
    background-color: #d13438;
    display: flex;
    align-items: center;
    justify-content: center;
    font-size: 11.500px;
}

.pen { margin-left: 25px; }
.win-btn { margin-left: 36px; }
.pen + .win-btn { margin-left: 33px; }

/* menu row */
.menubar {
    height: 30px;
    flex: none;
    display: flex;
    align-items: center;
    padding-left: 22px;
    gap: 20px;
}

.m-item {
    height: 30px;
    line-height: 30px;
    font-size: 13.300px;
    position: relative;
}

.m-file { margin-right: 5px; }
.m-item.on { font-weight: 500; }

.m-item.on::after {
    content: "";
    position: absolute;
    left: 0;
    right: 0;
    bottom: 3px;
    height: 2px;
    background-color: #4fb784;
}

.m-right {
    margin-left: auto;
    display: flex;
    gap: 8px;
    padding-right: 12px;
}

.btn-comments, .btn-share {
    height: 24px;
    display: flex;
    align-items: center;
    gap: 6px;
    border-radius: 4px;
    font-family: inherit;
    font-size: 13.300px;
    padding: 0 7px;
}

.btn-comments {
    width: 95px;
    gap: 4px;
    background-color: #292929;
    border: 1px solid #6a6a6a;
    color: #f0f0f0;
    font-size: 12.800px;
}

.btn-share {
    width: 80px;
    background-color: #2ea35f;
    border: 0;
    color: #0c2c18;
}

.btn-share .chev { margin-left: 7px; }

/* ribbon */
.ribbon {
    height: 100px;
    flex: none;
    margin: 0 8px;
    display: flex;
    background-color: #292929;
    border-radius: 8px;
}

.group {
    position: relative;
    margin-top: 5px;
    height: 95px;
    display: flex;
    flex-direction: column;
    flex: none;
}

.group::after {
    content: "";
    position: absolute;
    right: 0;
    top: 0;
    bottom: 6px;
    width: 1px;
    background-color: #4c4c4c;
}

.g-body {
    height: 75px;
    display: flex;
}

.col {
    display: flex;
    flex-direction: column;
    gap: 8px;
    padding-top: 7px;
}

.g-label {
    height: 20px;
    line-height: 20px;
    text-align: center;
    position: relative;
    font-size: 12.500px;
    color: #ececec;
}

.g-label:has(.launch) { padding-right: 13px; }

.launch {
    position: absolute;
    right: 3px;
    top: 6px;
    fill: none;
    stroke: #bdbdbd;
}

.g-clip { width: 175px; }
.g-font { width: 235px; }
.g-align { width: 294px; }
.g-num { width: 162px; }
.g-styles { width: 493px; }
.g-cells { width: 146px; }
.g-edit { width: 208px; }
.g-ana { width: 62px; }

.g-clip .g-body { padding-left: 18px; }
.g-font .g-body { padding-left: 8px; }
.g-num .g-body { padding-left: 9px; }
.g-styles .g-body { padding-left: 10px; }
.g-cells .g-body { padding-left: 6px; }
.g-edit .g-body { padding-left: 12px; }

.paste {
    width: 36px;
    display: flex;
    flex-direction: column;
    align-items: center;
    padding-top: 5px;
}

.paste-txt {
    margin-top: 9px;
    color: #7b7b7b;
    font-size: 12.500px;
}

.paste .chev { margin-top: 8px; }

.stack {
    margin-left: 6px;
    margin-top: -1px;
    display: flex;
    flex-direction: column;
}

.s-row {
    height: 26.500px;
    display: flex;
    align-items: center;
    gap: 5px;
    white-space: nowrap;
}

.ic-s { flex: none; display: block; margin-right: -1px; }

.copy-c { margin-left: 9px; }

.r-row {
    height: 24px;
    display: flex;
    align-items: center;
}

.combo {
    height: 24px;
    display: flex;
    align-items: center;
    justify-content: space-between;
    padding: 0 5px 0 3px;
    border: 1px solid #7a7a7a;
    border-radius: 4px;
}

.c-font { width: 123px; }
.c-size { width: 42px; margin-left: 2px; }
.c-general { width: 146px; }

.glyph-a {
    width: 26px;
    text-align: center;
    font-size: 18px;
    line-height: 1;
    color: #d8d8d8;
    margin-left: 4px;
}

.glyph-a.small { font-size: 15px; margin-left: 0; }
.glyph-a sup { color: #3f9ae0; font-size: 11px; line-height: 0; vertical-align: 5px; }

.ib {
    width: 24px;
    height: 24px;
    flex: none;
    display: flex;
    align-items: center;
    justify-content: center;
    margin-right: 2px;
    font-size: 14px;
    color: #d8d8d8;
}

.ib .it { font-family: "Liberation Serif", serif; font-size: 15px; }
.cw { width: 5px; margin-left: 3px; margin-right: 4px; }
.bd { margin-left: 6px; }

.sep {
    width: 1px;
    height: 24px;
    background-color: #5a5a5a;
    flex: none;
}

.s1 { margin: 0 6px 0 0; }
.fc { margin-left: 3px; }

.fc-a {
    font-size: 14px;
    line-height: 14px;
    border-bottom: 4px solid #f00;
    padding: 0 2px;
    height: 20px;
    display: block;
}

.al-left {
    width: 146px;
    flex: none;
    padding-left: 10px;
    border-right: 1px solid #4c4c4c;
    margin-bottom: 10px;
}

.ia {
    width: 22px;
    height: 24px;
    flex: none;
    margin-right: 4px;
    display: flex;
    align-items: center;
    justify-content: center;
    border-radius: 4px;
}

.ia.sel { background-color: #3b3b3b; border: 1px solid #888; margin-right: 3px; }
.s2 { margin-right: 2px; }
.ind2 { margin-right: 0; }

.al-right {
    padding-left: 11px;
}

.a-row {
    height: 24px;
    display: flex;
    align-items: center;
    gap: 5px;
    white-space: nowrap;
}

.abc-ic {
    width: 15px;
    flex: none;
    display: flex;
    flex-direction: column;
    font-size: 9.500px;
    line-height: 11px;
    color: #d8d8d8;
}

.merge-c { margin-left: 8px; }

.big-g { font-size: 17px; }
.pct { margin-left: 3px; }
.comma {
    font-family: "Liberation Serif", serif;
    font-size: 26px;
    font-weight: 700;
    line-height: 12px;
    align-items: flex-start;
}
.s3 { margin-left: 1px; margin-right: 2px; }

.dec {
    width: 24px;
    margin-right: 2px;
    font-size: 9.500px;
    line-height: 10px;
    text-align: right;
}

.dec-a em { color: #3f9ae0; font-style: normal; }

.bigbtn {
    flex: none;
    display: flex;
    flex-direction: column;
    align-items: center;
    line-height: 16px;
    padding-bottom: 6px;
    white-space: nowrap;
}

.bigbtn > .chev { margin-top: 6px; margin-bottom: 5px; }

.bicon {
    display: block;
    flex: none;
    margin-top: 7px;
}

.bicon.m5 { margin-top: 5px; }
.bicon.m4 { margin-top: 4px; }
.bicon.m3 { margin-top: 3px; }
.bicon.m2 { margin-top: 2px; }

/* text lines sit at the bottom of the big buttons */
.bicon + span, .sort-ic + span { margin-top: auto; }

.w72 { width: 72px; }
.w64 { width: 64px; }
.w44 { width: 44.500px; }
.w46 { width: 46px; }
.w62 { width: 62px; }

.gallery {
    width: 336px;
    height: 62px;
    margin-top: 7px;
    display: flex;
    justify-content: space-between;
    border: 1px solid #6a6a6a;
    border-radius: 5px;
}

.st-grid {
    padding: 5px 0 0 4px;
    display: grid;
    grid-template-columns: repeat(3, 100px);
    grid-auto-rows: 22px;
    gap: 6px;
}

.st {
    display: flex;
    align-items: center;
    padding-left: 4px;
    font-family: Lato, "Liberation Sans", sans-serif;
    font-size: 13.500px;
}

.st-normal { background: #fff; color: #000; outline: 2px solid #999; outline-offset: 0; }
.st-bad { background: #ffc7ce; color: #9c0006; }
.st-good { background: #c6efce; color: #006100; }
.st-neutral { background: #ffeb9c; color: #9c5700; }
.st-calc { background: #f2f2f2; color: #fa7d00; font-weight: 700; border: 1px solid #7f7f7f; }
.st-check { background: #a5a5a5; color: #fff; font-weight: 700; border: 3px double #3f3f3f; }

.st-scroll {
    width: 12px;
    display: flex;
    flex-direction: column;
    border-left: 1px solid #6a6a6a;
}

.st-scroll span {
    flex: 1;
    display: flex;
    align-items: center;
    justify-content: center;
    border-bottom: 1px solid #6a6a6a;
}

.st-scroll span:last-child { border-bottom: 0; }
.st-scroll .tri-up { border-bottom-color: #6f6f6f; }

.sigma { font-size: 17px; width: 16px; text-align: center; margin-right: -1px; color: #d8d8d8; }
.auto-c { margin-left: 8px; }
.g-edit .stack { width: 96px; margin-left: 0; }

.sort-ic {
    height: 26px;
    margin-top: 5px;
    display: flex;
    align-items: center;
}

.az {
    display: flex;
    flex-direction: column;
    font-size: 13.500px;
    line-height: 14px;
    color: #3f9ae0;
}

.az em { font-style: normal; color: #d8d8d8; }

.collapse {
    margin-left: auto;
    margin-right: 12px;
    align-self: flex-end;
    margin-bottom: 12px;
}

/* formula bar */
.formula {
    margin: 8px 8px 7px;
    height: 26px;
    flex: none;
    display: flex;
    align-items: center;
}

.namebox {
    width: 101px;
    height: 26px;
    display: flex;
    align-items: center;
    justify-content: space-between;
    padding: 0 8px 0 6px;
    background-color: #292929;
    border: 1px solid #5c5c5c;
    border-radius: 4px;
    font-size: 13.300px;
}

.f-dots { width: 21px; text-align: center; font-size: 14px; }

.fxbox {
    width: 74px;
    height: 26px;
    display: flex;
    align-items: center;
    gap: 11px;
    padding-left: 6px;
    background-color: #292929;
    border: 1px solid #5c5c5c;
    border-radius: 4px;
}

.fx {
    font-family: "Liberation Serif", serif;
    font-size: 18px;
    line-height: 18px;
    color: #d8d8d8;
}

.f-input {
    margin-left: 4px;
    flex: 1;
    height: 26px;
    display: flex;
    align-items: center;
    justify-content: flex-end;
    padding-right: 6px;
    background-color: #292929;
    border: 1px solid #5c5c5c;
    border-radius: 4px;
}

/* the sheet */
.sheet {
    height: 810px;
    flex: none;
    display: flex;
}

.grid-wrap {
    position: relative;
    width: 1899px;
    flex: none;
    overflow: hidden;
    background-color: #fff;
}

.cells {
    table-layout: fixed;
    width: 1899px;
    border-collapse: separate;
    border-spacing: 0;
    font-family: Lato, "Liberation Sans", sans-serif;
    font-size: 14.200px;
    color: #000;
}

.w-row { width: 26px; }
.w-a { width: 203px; }
.w-b { width: 95px; }
.w-c { width: 53px; }
.w-d { width: 51px; }
.w-e { width: 53px; }
.w-f { width: 173px; }
.w-n { width: 64px; }
.w-z { width: 29px; }

.cells thead th {
    height: 19px;
    padding: 0;
    background-color: #0a0a0a;
    color: #dcdcdc;
    font-family: "Noto Sans", sans-serif;
    font-size: 13px;
    font-weight: 400;
    line-height: 18px;
    border-right: 1px solid #5a5a5a;
    border-bottom: 1px solid #777;
}

.cells thead th.corner {
    position: relative;
    border-right: 1px solid #333;
}

.corner i {
    position: absolute;
    right: 1px;
    bottom: 1px;
    width: 0;
    height: 0;
    border-left: 8px solid transparent;
    border-bottom: 8px solid #7fa78e;
}

.cells thead th.sel-col {
    background-color: #6a6a6a;
    border-bottom: 2px solid #1e7145;
    color: #fff;
}

.cells tbody th {
    height: 20px;
    padding: 0;
    background-color: #0a0a0a;
    color: #dcdcdc;
    font-family: "Noto Sans", sans-serif;
    font-size: 13px;
    font-weight: 400;
    border-bottom: 1px solid #5a5a5a;
    border-right: 1px solid #333;
}

.cells tbody th.sel-row {
    background-color: #6a6a6a;
    border-right: 2px solid #1e7145;
    color: #fff;
}

.cells td {
    height: 20px;
    padding: 0;
    text-align: center;
    white-space: nowrap;
    line-height: 18px;
    border-right: 1px solid #e1e1e1;
    border-bottom: 1px solid #e1e1e1;
}

.cells td:nth-child(7) {
    text-align: left;
    padding-left: 2px;
}

.pv td:nth-child(n+7):nth-child(-n+9) { border-right: 0; }
.pv td:nth-child(n+7):nth-child(-n+10) { border-bottom: 0; }

.head td:nth-child(n+7):nth-child(-n+10),
.total td:nth-child(n+7):nth-child(-n+10) {
    background-color: #d9e1f2;
    font-weight: 700;
    border-right: 0;
}

.head td:nth-child(n+7):nth-child(-n+10) { border-bottom: 1px solid #8ea9db; }
.total td:nth-child(n+7):nth-child(-n+10) { border-top: 1px solid #8ea9db; }

.first td:nth-child(-n+6) { font-weight: 700; }

.cells td.rest {
    border: 0;
    background-image:
        linear-gradient(#e1e1e1, #e1e1e1),
        repeating-linear-gradient(90deg, transparent 0, transparent 63px, #e1e1e1 63px, #e1e1e1 64px);
    background-size: 100% 1px, 100% 100%;
    background-position: 0 100%, 0 0;
    background-repeat: no-repeat;
}

.rowlab {
    display: flex;
    align-items: center;
    justify-content: space-between;
    padding-right: 1px;
}

.filt {
    width: 17px;
    height: 15px;
    display: flex;
    align-items: center;
    justify-content: center;
    background-color: #f3f3f3;
    border: 1px solid #a0a0a0;
}

.tall th, .tall td {
    height: 45px;
    vertical-align: bottom;
    line-height: 27px;
}

.cells td.big {
    padding: 6px 0 0 37px;
    font-size: 32.700px;
    line-height: 38px;
    vertical-align: middle;
}

.active-cell {
    position: absolute;
    left: 1804px;
    top: 699px;
    width: 66px;
    height: 21px;
    border: 2px solid #1e7145;
}

.active-cell i {
    position: absolute;
    right: -4px;
    bottom: -4px;
    width: 6px;
    height: 6px;
    background-color: #1e7145;
    border: 1px solid #fff;
}

.chart {
    position: absolute;
    left: 846px;
    top: 19px;
    width: 1014px;
    height: 643px;
    background-color: #fff;
    border-right: 1px solid #d9d9d9;
    border-bottom: 1px solid #d9d9d9;
}

.chart-svg {
    display: block;
    font-family: Lato, "Liberation Sans", sans-serif;
}

.c-title { font-size: 17.600px; fill: #595959; }
.c-hi { fill: #e3601f; }
.c-gridlines { stroke: #d9d9d9; fill: none; }
.b-x, .b-y, .b-z { height: 11.400px; }
.b-x { y: 2.600px; fill: #4472c4; }
.b-y { y: 17.400px; fill: #ed7d31; }
.b-z { y: 32.200px; fill: #a5a5a5; }
.c-cats, .c-vals, .c-axis { font-size: 11.500px; fill: #595959; }

.chart-tip {
    position: absolute;
    left: 174px;
    top: 41px;
    width: 69px;
    height: 20px;
    line-height: 18px;
    text-align: center;
    background-color: #f6f6f6;
    border: 1px solid #e2e2e2;
    border-radius: 3px;
    color: #595959;
    font-family: Lato, "Liberation Sans", sans-serif;
    font-size: 12.500px;
}

.vscroll {
    flex: 1;
    display: flex;
    flex-direction: column;
    align-items: center;
    padding: 7px 0 5px 1px;
    background-color: #141414;
}

.tri-up, .tri-down, .tri-left, .tri-right {
    display: block;
    width: 0;
    height: 0;
    flex: none;
    border-style: solid;
    border-color: transparent;
}

.tri-up { border-width: 0 5px 6px; border-bottom-color: #a8a8a8; }
.tri-down { border-width: 6px 5px 0; border-top-color: #a8a8a8; margin-top: auto; }
.tri-left { border-width: 4px 5px 4px 0; border-right-color: #a0a0a0; }
.tri-right { border-width: 4px 0 4px 5px; border-left-color: #a0a0a0; }

.v-thumb {
    margin-top: 4px;
    width: 10px;
    height: 30px;
    background-color: #9b9b9b;
    border-radius: 5px;
}

/* tabs and bottom scrollbar */
.tabbar {
    height: 28px;
    flex: none;
    display: flex;
    border-top: 1px solid #9a9a9a;
    background-color: #0a0a0a;
}

.tab-strip {
    margin-left: 16px;
    width: 504px;
    height: 27px;
    flex: none;
    display: flex;
    background-color: #1f1f1f;
}

.tab-nav {
    width: 84px;
    display: flex;
    align-items: center;
    gap: 22px;
    padding-left: 12px;
}

.tab {
    height: 24px;
    padding: 0 10px;
    margin-right: 3px;
    display: flex;
    align-items: center;
    justify-content: center;
    background-color: #2b2b2b;
    border-right: 1px solid #6a6a6a;
    width: 95px;
    font-size: 13.300px;
}

.tab + .tab { margin-right: 5px; }

.tab.on {
    width: 164px;
    height: 25px;
    background-color: #fff;
    color: #1e7145;
    font-weight: 700;
    border-right: 0;
    border-bottom: 3px solid #1e7145;
}

.tab-add {
    flex: 1;
    display: flex;
    align-items: center;
    padding-left: 30px;
    height: 24px;
}

.h-dots {
    margin-left: 625px;
    width: 15px;
    text-align: center;
    line-height: 24px;
    font-size: 14px;
}

.hscroll {
    margin-left: 8px;
    width: 732px;
    height: 20px;
    margin-top: 3px;
    display: flex;
    align-items: center;
    gap: 7px;
    padding: 0 5px;
    background-color: #141414;
    border-radius: 9px;
}

.h-thumb {
    width: 674px;
    height: 10px;
    background-color: #9b9b9b;
    border-radius: 5px;
}

.hscroll .tri-right { margin-left: 23px; }

/* status bar */
.statusbar {
    height: 23px;
    flex: none;
    display: flex;
    align-items: center;
    padding-left: 8px;
    background-color: #141414;
    border-top: 1px solid #3d3d3d;
    border-bottom: 1px solid #5a5a5a;
    font-size: 12.500px;
}

.st-ready { width: 31px; flex: none; }
.access { margin-left: 19px; margin-right: 3px; }
.st-acc { font-size: 13px; letter-spacing: .6px; }

.st-right {
    margin-left: auto;
    height: 100%;
    display: flex;
    align-items: center;
}

.view {
    width: 40px;
    height: 100%;
    display: flex;
    align-items: center;
    justify-content: center;
}

.view.on { background-color: #2a2a2a; }

.zoom-minus { margin-left: 8px; font-size: 14px; }
.zoom-plus { margin-left: 4px; font-size: 15px; }
.zoom-pct { margin-left: 11px; margin-right: 6px; font-size: 12px; }

.zoom-track {
    margin-left: 4px;
    width: 100px;
    height: 1px;
    background-color: #aaa;
    position: relative;
}

.zoom-track i {
    position: absolute;
    left: 48px;
    top: -8px;
    width: 5px;
    height: 16px;
    background-color: #aaa;
}
```
